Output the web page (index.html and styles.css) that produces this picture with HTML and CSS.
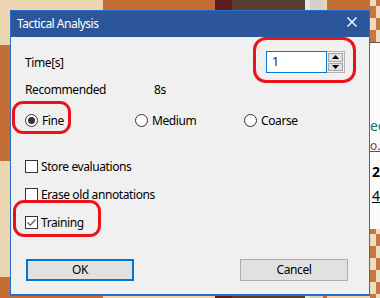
FILE: index.html
```html
<!DOCTYPE html>
<html lang="en">
<head>
    <meta charset="UTF-8">
    <title>Tactical Analysis</title>
    <link rel="stylesheet" href="styles.css">
</head>
<body>

<!--SIDEPANEL BAK DIALOGEN-->
<div class="side">
    <div class="notation">
        <p class="n-ed">ed</p>
        <p class="n-var">o.!</p>
        <p class="n-num">2</p>
        <p class="n-mv">4:</p>
    </div>
</div>

<div class="dialog">
    <div class="titlebar">
        <span>Tactical Analysis</span>
        <svg class="close" width="10" height="10" viewBox="0 0 10 10">
            <path d="M0.5 0.5 L9.5 9.5 M9.5 0.5 L0.5 9.5" stroke="#fff" stroke-width="1.4"/>
        </svg>
    </div>

    <div class="content">
        <div class="row-time">
            <span>Time[s]</span>
            <div class="spin">
                <div class="spin-input">1</div>
                <div class="spin-btns">
                    <div class="spin-btn">
                        <svg width="7" height="4" viewBox="0 0 7 4"><polygon points="3.5,0 7,4 0,4" fill="#000"/></svg>
                    </div>
                    <div class="spin-btn">
                        <svg width="7" height="4" viewBox="0 0 7 4"><polygon points="0,0 7,0 3.5,4" fill="#000"/></svg>
                    </div>
                </div>
            </div>
        </div>

        <div class="row-rec">
            <span>Recommended</span>
            <span>8s</span>
        </div>

        <div class="row-radios">
            <div class="opt"><span class="radio checked"></span>Fine</div>
            <div class="opt"><span class="radio"></span>Medium</div>
            <div class="opt"><span class="radio"></span>Coarse</div>
        </div>

        <div class="check check-first"><span class="box"></span>Store evaluations</div>
        <div class="check"><span class="box"></span>Erase old annotations</div>
        <div class="check">
            <span class="box">
                <svg width="11" height="11" viewBox="0 0 11 11"><polyline points="1.5,5.5 4.2,8.2 9.5,2.5" fill="none" stroke="#6a6a6a" stroke-width="1.5"/></svg>
            </span>Training
        </div>

        <div class="buttons">
            <div class="btn btn-default">OK</div>
            <div class="btn">Cancel</div>
        </div>
    </div>

    <!--RØDE MARKERINGER-->
    <div class="mark mark-spin"></div>
    <div class="mark mark-fine"></div>
    <div class="mark mark-train"></div>
</div>

</body>
</html>
```

FILE: styles.css
```css
/*BAKGRUNN: SJAKKBRETT*/
body {
    margin: 0;
    width: 380px;
    height: 298px;
    overflow: hidden;
    position: relative;
    font-family: "Noto Sans", "DejaVu Sans", sans-serif;
    font-size: 12px;
    letter-spacing: -0.4px;
    color: #000;
    background:
        linear-gradient(to right, transparent 215px, #5d1d20 215px, #5d1d20 232px, #573d31 232px, #573d31 305px, #e6e4e1 305px, #e6e4e1 310px, #d4d0cb 310px, #d4d0cb 323px, transparent 323px),
        repeating-conic-gradient(#c46d35 0 25%, #ecd6b2 0 50%) -9px -71px / 224px 232px;
}

/*SIDEPANEL*/
.side {
    position: absolute;
    left: 370px;
    top: 0;
    width: 10px;
    height: 298px;
    background: repeating-conic-gradient(#c8763f 0 25%, #efdcbc 0 50%) 0 -6px / 12px 24px;
}
.notation {
    margin-top: 42px;
    height: 186px;
    background-color: #fbfbfb;
    border-top: 1px solid #5a5a5a;
    overflow: hidden;
    white-space: nowrap;
    font-size: 14px;
    letter-spacing: 0;
}
.notation p {
    margin: 0;
    line-height: 20px;
}
.n-ed {
    margin-top: 73px !important;
    color: #1a6a78;
}
.n-var {
    color: #b0205a;
    text-decoration: underline;
    font-size: 12px;
}
.n-num {
    margin-top: 6px !important;
    padding-left: 2px;
    font-weight: bold;
}
.n-mv {
    padding-left: 2px;
    text-decoration: underline;
    margin-top: 4px !important;
}

/*DIALOGEN*/
.dialog {
    position: absolute;
    left: 10px;
    top: 10px;
    width: 358px;
    height: 283px;
    border: 1px solid #2a6ccc;
    border-bottom-width: 2px;
    background-color: #f0f0f0;
}
.titlebar {
    height: 24px;
    background-color: #2b579a;
    color: #fff;
    display: flex;
    align-items: center;
    justify-content: space-between;
    padding: 0 12px 2px 6px;
    font-size: 12px;
    letter-spacing: -0.5px;
}
.close {
    margin-top: -3px;
}
.content {
    padding: 14px 24px 0 14px;
    display: flex;
    flex-direction: column;
}
.row-time {
    height: 22px;
    display: flex;
    align-items: center;
    justify-content: space-between;
}
.spin {
    display: flex;
    height: 22px;
}
.spin-input {
    height: 20px;
    border: 1px solid #0078d7;
    background-color: #fff;
    color: #2a1a5e;
    line-height: 20px;
    padding-left: 5px;
    width: 54px;
    font-size: 12.5px;
}
.spin-btns {
    width: 15px;
    border: 1px solid #b4b4b4;
    border-left: none;
    padding: 1px;
    display: flex;
    flex-direction: column;
    gap: 1px;
}
.spin-btn {
    flex: 1;
    background-color: #e1e1e1;
    border: 1px solid #a8a8a8;
    display: flex;
    align-items: center;
    justify-content: center;
}
.row-rec {
    margin-top: 8px;
    height: 16px;
    display: grid;
    grid-template-columns: 129px auto;
    align-items: center;
}
.row-radios {
    margin-top: 15px;
    height: 16px;
    display: grid;
    grid-template-columns: 110px 109px auto;
    align-items: center;
}
.opt, .check {
    display: flex;
    align-items: center;
    height: 16px;
}
.radio {
    width: 11px;
    height: 11px;
    border: 1px solid #333;
    border-radius: 50%;
    background-color: #fff;
    margin-right: 4px;
    display: flex;
    align-items: center;
    justify-content: center;
}
.radio.checked::after {
    content: "";
    width: 7px;
    height: 7px;
    border-radius: 50%;
    background-color: #333;
}
.check {
    margin-top: 12px;
}
.check-first {
    margin-top: 30px;
}
.box {
    width: 11px;
    height: 11px;
    border: 1px solid #333;
    background-color: #fff;
    margin-right: 3px;
    display: flex;
    align-items: center;
    justify-content: center;
}
.buttons {
    margin-top: 29px;
    margin-left: 1px;
    margin-right: -3px;
    display: flex;
    justify-content: space-between;
}
.btn {
    width: 106px;
    height: 20px;
    border: 1px solid #adadad;
    background-color: #e1e1e1;
    text-align: center;
    line-height: 20px;
}
.btn-default {
    width: 104px;
    height: 18px;
    line-height: 18px;
    border: 2px solid #0078d7;
}

/*RØDE MARKERINGER*/
.mark {
    position: absolute;
    border: 3px solid #e8131b;
    border-radius: 11px;
}
.mark-spin {
    left: 242px;
    top: 26px;
    width: 97px;
    height: 40px;
    border-radius: 13px;
}
.mark-fine {
    left: 1px;
    top: 90px;
    width: 53px;
    height: 27px;
}
.mark-train {
    left: 2px;
    top: 189px;
    width: 82px;
    height: 31px;
}
```
